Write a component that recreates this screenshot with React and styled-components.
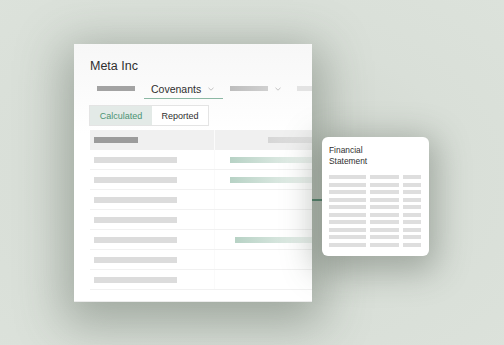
import React from "react"
import styled, { createGlobalStyle } from "styled-components"

const GlobalStyle = createGlobalStyle`
    html, body {
        margin: 0;
        padding: 0;
        background: #d9dfd8;
    }
    body {
        font-family: "Liberation Sans", Arial, sans-serif;
        color: #333;
    }
`

const Scene = styled.div`
    width: 504px;
    height: 345px;
    box-sizing: border-box;
    padding: 44px 0 0 74px;
    display: flex;
    align-items: flex-start;
    overflow: hidden;
    background: radial-gradient(ellipse at 48% 52%, #cdd3cb 0%, #d9dfd8 60%, #dce2db 100%);
`

const Panel = styled.div`
    width: 238px;
    height: 258px;
    box-sizing: border-box;
    padding: 14px 0 0 16px;
    background: linear-gradient(#f7f7f7, #ffffff 35%);
    box-shadow: 0 12px 44px 10px rgba(75, 88, 75, 0.4);
    overflow: hidden;
    flex-shrink: 0;
    border-bottom: 1px solid #ececec;
`

const Title = styled.h1`
    margin: 0;
    font-size: 12.5px;
    line-height: 16px;
    font-weight: 400;
    color: #2f2f2f;
    white-space: nowrap;
`

const Tabs = styled.div`
    display: flex;
    align-items: stretch;
    height: 20px;
    margin-top: 5px;
    white-space: nowrap;
`

const Tab = styled.div`
    display: flex;
    align-items: center;
    gap: 7px;
    padding: 0 9px 0 7px;
    border-bottom: 1.5px solid ${p => (p.$active ? "#8cb8a4" : "transparent")};
    font-size: 10.5px;
    color: #2f2f2f;
`

const Bar = styled.div`
    width: ${p => p.$w}px;
    height: ${p => p.$h || 5}px;
    background: ${p => p.$c || "#dcdcdc"};
    flex-shrink: 0;
`

const Chevron = () => (
    <svg width="6" height="4" viewBox="0 0 6 4" fill="none">
        <path d="M0.5 0.8 L3 3.2 L5.5 0.8" stroke="#b4b4b4" strokeWidth="0.8" />
    </svg>
)

const Segmented = styled.div`
    display: inline-flex;
    margin: 6px 0 0 -1px;
    height: 21px;
    border: 1px solid #e4e4e4;
    box-sizing: border-box;
`

const Segment = styled.div`
    display: flex;
    align-items: center;
    width: ${p => p.$w}px;
    justify-content: center;
    font-size: 9px;
    background: ${p => (p.$active ? "#e3eae7" : "#ffffff")};
    color: ${p => (p.$active ? "#4b9373" : "#2f2f2f")};
`

const Table = styled.div`
    width: 300px;
    margin-top: 4px;
`

const Row = styled.div`
    display: grid;
    grid-template-columns: 124px 1fr;
    height: 20px;
    box-sizing: border-box;
    border-bottom: ${p => (p.$head ? "none" : "1px solid #f1f1f1")};
`

const Cell = styled.div`
    display: flex;
    align-items: center;
    padding-left: ${p => p.$pad || 4}px;
    background: ${p => (p.$head ? "#f0f0f0" : "transparent")};
    border-left: ${p => (p.$divider ? "1px solid " + (p.$head ? "#fbfbfb" : "#fafafa") : "none")};
`

const GreenBar = styled.div`
    width: 90px;
    height: 6px;
    background: linear-gradient(90deg, #b7d2c5, #e6efea 75%, #f3f6f4);
`

const Connector = styled.div`
    width: 10px;
    height: 1.5px;
    margin-top: 155px;
    background: #4f7d68;
    flex-shrink: 0;
`

const Card = styled.div`
    width: 107px;
    height: 119px;
    box-sizing: border-box;
    margin-top: 93px;
    padding: 8px 7px;
    background: #ffffff;
    border-radius: 6px;
    box-shadow: 0 8px 32px 8px rgba(75, 88, 75, 0.38);
    flex-shrink: 0;
`

const CardTitle = styled.div`
    font-size: 8.4px;
    line-height: 11px;
    color: #2f2f2f;
`

const CardGrid = styled.div`
    display: grid;
    grid-template-columns: 37px 29px 18px;
    column-gap: 4px;
    row-gap: 3.5px;
    margin-top: 8px;
`

const CardBar = styled.div`
    height: 4px;
    background: #dedede;
`

const rows = [
    { green: 15 },
    { green: 15 },
    {},
    {},
    { green: 20 },
    {},
    {},
]

const App = () => {
    return (
        <>
            <GlobalStyle />
            <Scene>
                <Panel>
                    <Title>Meta Inc</Title>
                    <Tabs>
                        <Tab><Bar $w={38} $h={5} $c="#a3a3a3" /></Tab>
                        <Tab $active>Covenants<Chevron /></Tab>
                        <Tab><Bar $w={38} $h={5} $c="linear-gradient(90deg,#bdbdbd,#d0d0d0)" /><Chevron /></Tab>
                        <Tab><Bar $w={30} $h={5} $c="#e3e3e3" /></Tab>
                    </Tabs>
                    <Segmented>
                        <Segment $active $w={62}>Calculated</Segment>
                        <Segment $w={56}>Reported</Segment>
                    </Segmented>
                    <Table>
                        <Row $head>
                            <Cell $head><Bar $w={44} $h={6} $c="#9c9c9c" /></Cell>
                            <Cell $head $divider $pad={53}>
                                <Bar $w={60} $h={6} $c="linear-gradient(90deg,#d6d6d6,#e6e6e6)" />
                            </Cell>
                        </Row>
                        {rows.map((r, i) => (
                            <Row key={i}>
                                <Cell><Bar $w={83} $h={6} /></Cell>
                                <Cell $divider $pad={r.green || 15}>
                                    {r.green ? <GreenBar /> : null}
                                </Cell>
                            </Row>
                        ))}
                    </Table>
                </Panel>
                <Connector />
                <Card>
                    <CardTitle>Financial<br />Statement</CardTitle>
                    <CardGrid>
                        {Array.from({ length: 30 }).map((_, i) => (
                            <CardBar key={i} />
                        ))}
                    </CardGrid>
                </Card>
            </Scene>
        </>
    )
}

export default App
